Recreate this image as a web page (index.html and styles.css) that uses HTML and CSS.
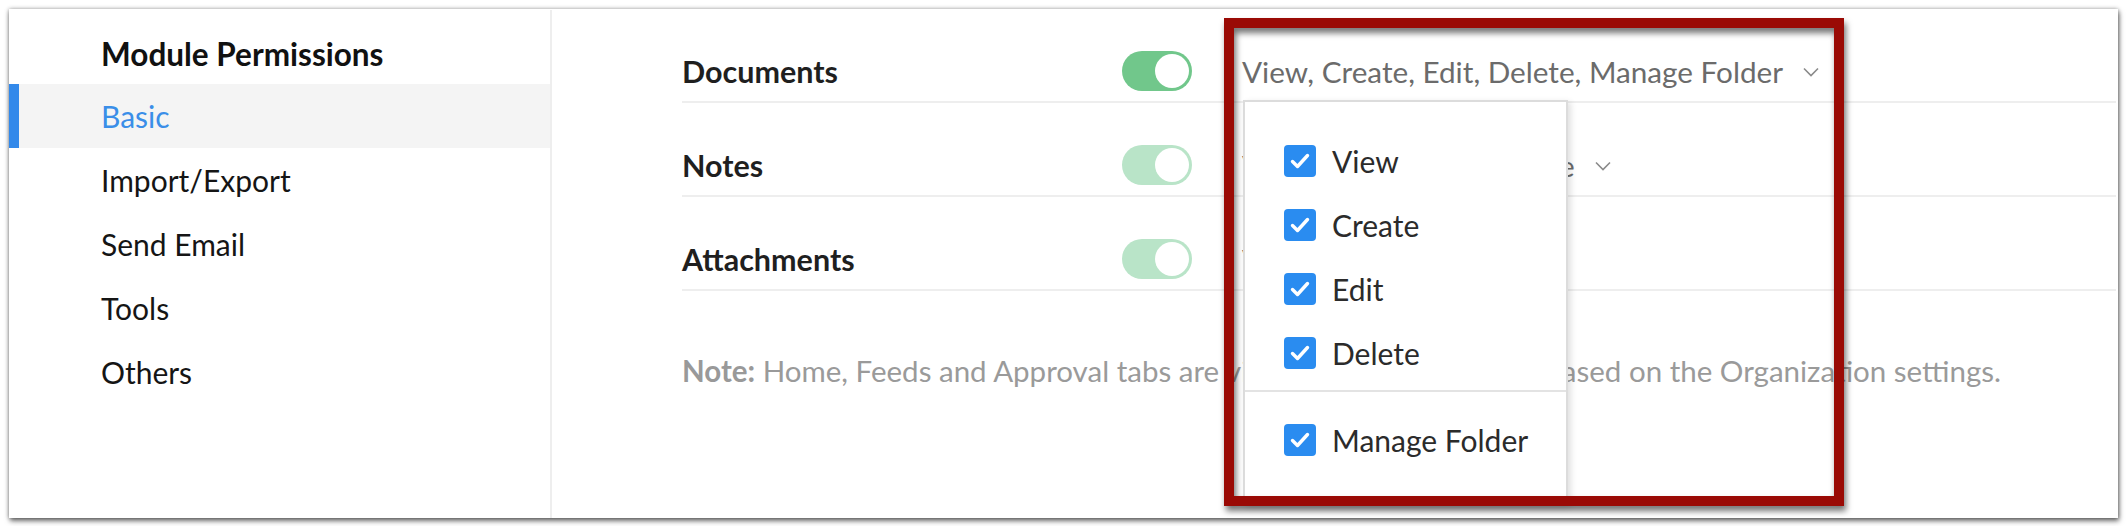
FILE: index.html
```html
<!DOCTYPE html>
<html lang="en">
<head>
<meta charset="utf-8">
<title>Module Permissions</title>
<link rel="stylesheet" href="styles.css">
</head>
<body>
<div class="page">
  <div class="card">
    <aside class="sidebar">
      <h2 class="side-title">Module Permissions</h2>
      <ul class="nav">
        <li class="nav-item active">Basic</li>
        <li class="nav-item">Import/Export</li>
        <li class="nav-item">Send Email</li>
        <li class="nav-item">Tools</li>
        <li class="nav-item">Others</li>
      </ul>
    </aside>
    <main class="main">
      <div class="perm-row">
        <div class="perm-label">Documents</div>
        <div class="toggle on"><span class="knob"></span></div>
        <div class="perm-value">
          <span class="value-text">View, Create, Edit, Delete, Manage Folder</span>
          <svg class="chev" width="16" height="10" viewBox="0 0 16 10"><polyline points="1,1.5 8,8.5 15,1.5" fill="none" stroke="#8a8a8a" stroke-width="1.6"/></svg>
          <div class="dropdown">
            <ul class="dd-list">
              <li class="dd-item"><span class="cb"><svg width="32" height="32" viewBox="0 0 32 32"><polyline points="8.5,16.5 13.5,21.5 23.5,10.5" fill="none" stroke="#fff" stroke-width="3.4" stroke-linecap="round" stroke-linejoin="round"/></svg></span>View</li>
              <li class="dd-item"><span class="cb"><svg width="32" height="32" viewBox="0 0 32 32"><polyline points="8.5,16.5 13.5,21.5 23.5,10.5" fill="none" stroke="#fff" stroke-width="3.4" stroke-linecap="round" stroke-linejoin="round"/></svg></span>Create</li>
              <li class="dd-item"><span class="cb"><svg width="32" height="32" viewBox="0 0 32 32"><polyline points="8.5,16.5 13.5,21.5 23.5,10.5" fill="none" stroke="#fff" stroke-width="3.4" stroke-linecap="round" stroke-linejoin="round"/></svg></span>Edit</li>
              <li class="dd-item"><span class="cb"><svg width="32" height="32" viewBox="0 0 32 32"><polyline points="8.5,16.5 13.5,21.5 23.5,10.5" fill="none" stroke="#fff" stroke-width="3.4" stroke-linecap="round" stroke-linejoin="round"/></svg></span>Delete</li>
            </ul>
            <ul class="dd-list dd-extra">
              <li class="dd-item"><span class="cb"><svg width="32" height="32" viewBox="0 0 32 32"><polyline points="8.5,16.5 13.5,21.5 23.5,10.5" fill="none" stroke="#fff" stroke-width="3.4" stroke-linecap="round" stroke-linejoin="round"/></svg></span>Manage Folder</li>
            </ul>
          </div>
        </div>
      </div>
      <div class="perm-row">
        <div class="perm-label">Notes</div>
        <div class="toggle dim"><span class="knob"></span></div>
        <div class="perm-value">
          <span class="value-text">View, Create, Edit, Delete</span>
          <svg class="chev" width="16" height="10" viewBox="0 0 16 10"><polyline points="1,1.5 8,8.5 15,1.5" fill="none" stroke="#8a8a8a" stroke-width="1.6"/></svg>
        </div>
      </div>
      <div class="perm-row">
        <div class="perm-label">Attachments</div>
        <div class="toggle dim"><span class="knob"></span></div>
        <div class="perm-value">
          <span class="value-text">View, Create</span>
          <svg class="chev" width="16" height="10" viewBox="0 0 16 10"><polyline points="1,1.5 8,8.5 15,1.5" fill="none" stroke="#8a8a8a" stroke-width="1.6"/></svg>
        </div>
      </div>
      <p class="note"><b>Note:</b> Home, Feeds and Approval tabs are visible to all of the users based on the Organization settings.</p>
    </main>
    <div class="annotation"></div>
  </div>
</div>
</body>
</html>
```

FILE: styles.css
```css
* { box-sizing: border-box; }
html, body { margin: 0; padding: 0; background: #ffffff; }
body { font-family: Lato, "Open Sans", "Liberation Sans", sans-serif; }

.page { padding: 9px 8px 8px 9px; width: 2126px; height: 526px; }

.card {
  position: relative;
  width: 2109px;
  height: 509px;
  background: #fff;
  display: flex;
  box-shadow: 1px 3px 5px rgba(0,0,0,0.55), 0 0 4px rgba(0,0,0,0.35);
}

.sidebar {
  width: 543px;
  flex: none;
  border-right: 2px solid #eeeeee;
  padding-top: 20px;
  margin-top: 1px;
}
.side-title {
  margin: 0 0 6px 0;
  padding-left: 92px;
  font-size: 31.5px;
  line-height: 48px;
  font-weight: 700;
  color: #111;
}
.nav { list-style: none; margin: 0; padding: 0; }
.nav-item {
  height: 64px;
  line-height: 64px;
  font-size: 30px;
  color: #151515;
  padding-left: 92px;
}
.nav-item.active {
  background: #f4f4f4;
  color: #3a8ee8;
  border-left: 10px solid #3389ea;
  padding-left: 82px;
}

.main {
  position: relative;
  flex: 1;
  padding-left: 130px;
  padding-right: 2px;
}

.perm-row {
  display: flex;
  align-items: center;
  padding: 42px 0 10px 0;
  border-bottom: 2px solid #eeeeee;
}
.perm-label {
  width: 440px;
  flex: none;
  font-size: 30.5px;
  font-weight: 700;
  color: #1f1f1f;
}
.toggle {
  width: 70px;
  height: 40px;
  border-radius: 20px;
  flex: none;
  position: relative;
  display: flex;
  justify-content: flex-end;
  align-items: center;
  padding-right: 3px;
}
.toggle.on { background: #71c78b; }
.toggle.dim { background: #b9e4c8; }
.knob {
  width: 34px;
  height: 34px;
  border-radius: 50%;
  background: #fff;
}

.perm-value {
  position: relative;
  margin-left: 50px;
  display: flex;
  align-items: center;
  height: 40px;
  font-size: 29.7px;
  color: #6b6b6b;
}
.chev { margin-left: 20px; margin-top: 2px; }

.dropdown {
  position: absolute;
  left: 1px;
  top: 49px;
  width: 325px;
  height: 405px;
  background: #fff;
  border: 2px solid #dcdcdc;
  box-shadow: 3px 2px 6px rgba(0,0,0,0.12);
  z-index: 5;
  padding-top: 27px;
}
.dd-list { list-style: none; margin: 0; padding: 0; }
.dd-list:first-child { padding-bottom: 5px; border-bottom: 2px solid #e3e3e3; }
.dd-extra { padding-top: 16px; }
.dd-item {
  height: 64px;
  display: flex;
  align-items: center;
  padding-left: 39px;
  font-size: 30px;
  color: #2b2b2b;
}
.cb {
  width: 32px;
  height: 32px;
  border-radius: 4px;
  background: #2a8cf0;
  margin-right: 16px;
  display: flex;
  flex: none;
}

.note {
  margin: 62px 0 0 0;
  font-size: 29.5px;
  color: #9a9a9a;
}
.note b { font-weight: 700; color: #999; }

.annotation {
  position: absolute;
  left: 1215px;
  top: 9px;
  width: 620px;
  height: 488px;
  border: 10px solid #9a0a05;
  z-index: 10;
  filter: drop-shadow(2px 5px 3px rgba(0,0,0,0.55));
}
```
